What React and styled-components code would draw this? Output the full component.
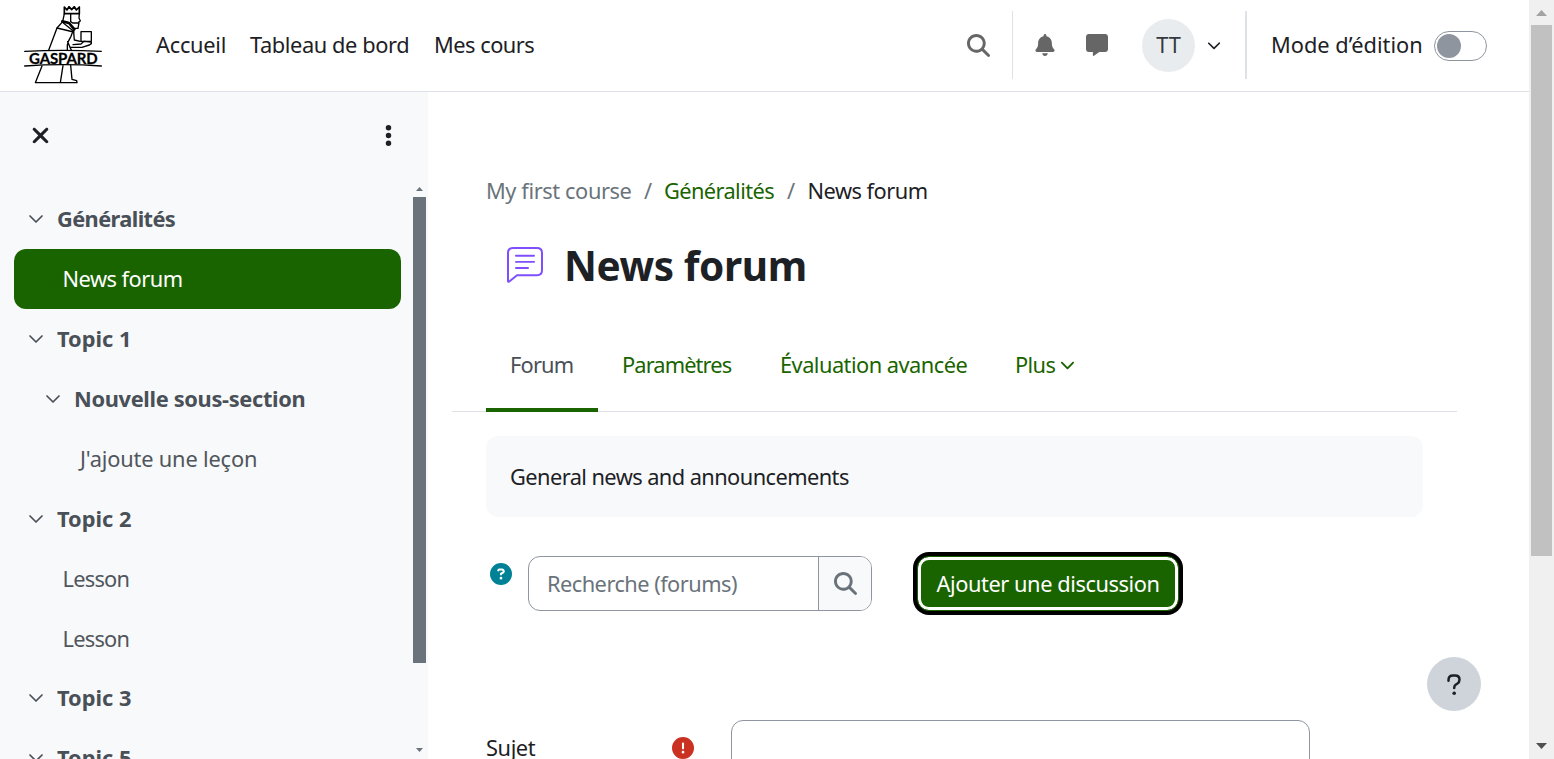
import React from "react";
import styled, { createGlobalStyle } from "styled-components";
import {
  FaMagnifyingGlass, FaBell, FaMessage, FaXmark, FaEllipsisVertical,
  FaCircleQuestion, FaCircleExclamation, FaChevronDown,
} from "react-icons/fa6";

const GlobalStyle = createGlobalStyle`
  * { box-sizing: border-box; }
  html, body { margin: 0; height: 100%; overflow: hidden; background: #fff; }
  body { font-family: "Segoe UI", "Noto Sans", sans-serif; font-size: 21.8px; line-height: 30px; color: #1d2125; }
  svg { display: block; flex: none; }
`;

const Page = styled.div`display: flex; width: 1554px; height: 759px; overflow: hidden;`;
const Site = styled.div`display: flex; flex-direction: column; width: 1529px; height: 759px;`;
const Text = styled.span`
  display: block; white-space: nowrap; letter-spacing: ${p => p.$track || 0}px;
`;

const Header = styled.header`
  display: flex; align-items: center; flex: none; height: 92px; padding: 0 42px 1px 24px;
  border-bottom: 1px solid #dee2e6;
`;
const Menu = styled.nav`display: flex; margin-left: 54px; flex: 1;`;
const MenuItem = styled.a`width: ${p => p.$w}px;`;
const Tools = styled.div`display: flex; align-items: center; color: #666;`;
const Notices = styled.div`display: flex; gap: 30px; margin-left: -1px; padding-bottom: 1px;`;
const Rule = styled.div`width: ${p => p.$w}px; height: 68px; background: #dee2e6; margin: 0 ${p => p.$right}px 0 ${p => p.$left}px;`;
const Avatar = styled.div`
  display: flex; align-items: center; justify-content: center; width: 53px; height: 53px;
  margin: 0 12px 0 34px; border-radius: 50%; background: #e9ecef; color: #343a40;
`;
const ModeLabel = styled.div`width: 163px; color: #1d2125;`;
const Switch = styled.div`
  display: flex; align-items: center; width: 53px; height: 30px; margin-top: 1px; padding-left: 2px;
  border: 1px solid #8f959e; border-radius: 15px;
`;
const Knob = styled.div`width: 24px; height: 24px; border-radius: 50%; background: #8f959e;`;

const Body = styled.div`display: flex; flex: 1; min-height: 0;`;
const Drawer = styled.aside`display: flex; flex-direction: column; width: 428px; background: #f8f9fb;`;
const DrawerHead = styled.div`
  display: flex; align-items: center; justify-content: space-between; flex: none;
  height: 91px; padding: 0 27px 5px 28px;
`;
const DrawerBody = styled.div`display: flex; flex: 1; min-height: 0; justify-content: space-between;`;
const Index = styled.div`width: 401px; padding: 6.5px 0 0 14px; overflow: hidden;`;
const IndexRow = styled.div`
  display: flex; align-items: center; height: 59.88px; padding-left: ${p => p.$indent}px;
  border-radius: 12px; color: ${p => (p.$active ? "#fff" : p.$bold ? "#495057" : "#50565c")};
  background: ${p => (p.$active ? "#1a6400" : "transparent")};
  font-weight: ${p => (p.$bold ? 700 : 400)};
  svg { margin-right: 13px; }
`;
const DrawerScroll = styled.div`
  display: flex; flex-direction: column; align-items: center; width: 13px; margin-right: 2px; padding: 4px 0 7px;
`;
const DrawerThumb = styled.div`width: 13px; height: 466px; margin: 6px 0 auto; background: #6a737b;`;

const Main = styled.main`display: flex; flex-direction: column; width: 1101px; padding: 84px 72px 0 24px;`;
const Crumbs = styled.div`display: flex; height: 30px; padding-left: 34px; color: #6a737b;`;
const Crumb = styled.div`width: ${p => p.$w}px; color: ${p => p.$color};`;
const TitleRow = styled.div`display: flex; align-items: center; height: 60px; margin-top: 30px; padding-left: 55px;
  svg { margin-bottom: 2px; }
`;
const Title = styled.h1`margin: 0 0 0 21px; font-size: 40.5px; line-height: 54px; font-weight: 700;`;
const Tabs = styled.nav`
  display: flex; height: 92px; margin-top: 24px; padding-left: 34px; border-bottom: 1px solid #dee2e6;
`;
const Tab = styled.a`
  display: flex; align-items: center; gap: 5px; width: ${p => p.$w}px; height: 92px; padding: 2px 0 0 24px;
  color: ${p => (p.$active ? "#495057" : "#1a6400")};
  border-bottom: 4px solid ${p => (p.$active ? "#1a6400" : "transparent")};
  svg { margin-bottom: 2px; }
`;
const Intro = styled.div`
  height: 81px; margin: 24px 34px 0; padding: 26px 24px; border-radius: 12px; background: #f8f9fb;
`;
const Actions = styled.div`display: flex; height: 63px; margin-top: 35px; padding-left: 38px;`;
const HelpIcon = styled.div`width: 38px; padding-top: 11px; color: #008196;`;
const Search = styled.div`
  display: flex; width: 344px; height: 55px; margin: 4px 41px 0 0; border: 1px solid #8f959e;
  border-radius: 12px; overflow: hidden; color: #6a737b;
`;
const SearchField = styled.div`flex: 1; padding: 12px 18px; color: #6a737b;`;
const SearchButton = styled.div`
  display: flex; align-items: center; justify-content: center; width: 53px;
  border-left: 1px solid #8f959e; background: #f8f9fb;
`;
const AddButton = styled.div`
  display: flex; align-items: center; justify-content: center; width: 262px; height: 55px; margin: 4px;
  border-radius: 12px; border: 1px solid #1a6400; background: #1a6400; color: #fff;
  box-shadow: 0 0 0 4px #000, inset 0 0 0 3px #fff;
`;
const FormRow = styled.div`display: flex; margin-top: 105px; padding-left: 34px; height: 39px;`;
const FieldName = styled.div`width: 186px; padding-top: 13px;`;
const Required = styled.div`width: 59px; padding-top: 17px; color: #ca3120;`;
const Field = styled.div`width: 579px; height: 55px; border: 1px solid #8f959e; border-radius: 12px;`;
const HelpButton = styled.div`
  position: absolute; left: 1427px; top: 657px; display: flex; align-items: center; justify-content: center;
  width: 54px; height: 54px; padding-top: 1px; border-radius: 50%; background: #ced4da;
`;
const PageScroll = styled.div`
  display: flex; flex-direction: column; align-items: center; width: 25px; padding: 10px 0; background: #f0f0f0;
`;
const PageThumb = styled.div`width: 21px; height: 531px; margin: 9px 0 auto; background: #c1c1c1;`;

const Arrow = ({ w, h, color, down }) => (
  <svg width={w} height={h} viewBox="0 0 10 6" preserveAspectRatio="none">
    <path d={down ? "M0 0h10L5 6z" : "M0 6h10L5 0z"} fill={color} />
  </svg>
);
const Chevron = () => (
  <svg width="16" height="10" viewBox="0 0 16 10" fill="none" stroke="currentColor" strokeWidth="1.7" strokeLinecap="round" strokeLinejoin="round">
    <path d="M2 2l6 6 6-6" />
  </svg>
);

const Logo = () => (
  <svg width="78" height="78" viewBox="72 18 234 234" fill="none" stroke="#000" strokeWidth="4" strokeLinejoin="round" strokeLinecap="round">
    <path d="M193 41V21l8 9 6-10 8 9 8-9 6 10 9-9v20z" strokeWidth="5" />
    <path d="M193 41l-5 24M238 41l-1 13 4 9-5 3M212 42v23l6 4h17M188 65l-17 19M188 65l18 3 16 17 12 0 3-17M190 69l31 25M171 84l50 12 1-7" />
    <path d="M187 64l20 5 16 19" strokeWidth="8" />
    <path d="M171 84l-25 67M217 98l-4 11-8 15-3 11v16M221 96l2 24 18 4M203 125l7 17h36l22-7 6-4v-5l-22-2-9 8-24 2M210 142l4 8" />
    <path d="M243 95h31v29h-31z" />
    <path d="M74 154q116-6 230 0M74 198q116-8 230 0" />
    <path d="M126 198l-20 50h125l-1-6-14-4-4-42M189 197l-8 51" />
    <text x="87" y="191" textLength="206" lengthAdjust="spacing" fill="#000" stroke="#000" strokeWidth="0.8" fontFamily="Lato, sans-serif" fontWeight="700" fontSize="45">GASPARD</text>
  </svg>
);
const ForumIcon = () => (
  <svg width="36" height="36" viewBox="0 0 36 37" preserveAspectRatio="none" fill="none" stroke="#7f4fff" strokeWidth="2" strokeLinecap="round" strokeLinejoin="round">
    <path d="M6 1h24q5 0 5 5v18q0 5-5 5H10l-8 6.6Q1 36 1 35V6q0-5 5-5zM9 9h18M9 15.3h18M9 21.6h12" />
  </svg>
);
const QuestionMark = () => (
  <svg width="14" height="22" viewBox="0 0 14 22" fill="none" stroke="#1d2125" strokeWidth="2.5" strokeLinecap="round" strokeLinejoin="round">
    <path d="M1.5 6.8V6Q1.5 1.6 6 1.6h2q4.5 0 4.5 4.2 0 2.6-2.3 4L8.6 10.8Q7.2 11.8 7.2 14" />
    <circle cx="7.2" cy="19.2" r="1.8" fill="#1d2125" stroke="none" />
  </svg>
);

const sections = [
  { label: "Généralités", bold: true, indent: 14, track: -0.6 },
  { label: "News forum", indent: 48.5, active: true, track: -0.52 },
  { label: "Topic 1", bold: true, indent: 14 },
  { label: "Nouvelle sous-section", bold: true, indent: 31, track: -0.33 },
  { label: "J'ajoute une leçon", indent: 66, track: -0.17 },
  { label: "Topic 2", bold: true, indent: 14 },
  { label: "Lesson", indent: 48.5, track: -0.75 },
  { label: "Lesson", indent: 48.5, track: -0.75 },
  { label: "Topic 3", bold: true, indent: 14 },
  { label: "Topic 5", bold: true, indent: 14 },
];

export default function App() {
  return (
    <Page>
      <GlobalStyle />
      <Site>
        <Header>
          <Logo />
          <Menu>
            <MenuItem $w={94}><Text $track={-0.25}>Accueil</Text></MenuItem>
            <MenuItem $w={184}><Text $track={-0.4}>Tableau de bord</Text></MenuItem>
            <MenuItem $w={120}><Text $track={-0.5}>Mes cours</Text></MenuItem>
          </Menu>
          <Tools>
            <FaMagnifyingGlass size={23} />
            <Rule $w={1} $left={22} $right={22} />
            <Notices>
              <FaBell size={22} />
              <FaMessage size={22} />
            </Notices>
            <Avatar><Text>TT</Text></Avatar>
            <FaChevronDown size={14} color="#1d2125" />
            <Rule $w={2} $left={24} $right={24} />
            <ModeLabel><Text>Mode d’édition</Text></ModeLabel>
            <Switch><Knob /></Switch>
          </Tools>
        </Header>
        <Body>
          <Drawer>
            <DrawerHead>
              <FaXmark size={25} />
              <FaEllipsisVertical size={25} />
            </DrawerHead>
            <DrawerBody>
              <Index>
                {sections.map((s, i) => (
                  <IndexRow key={i} $indent={s.indent} $bold={s.bold} $active={s.active}>
                    {s.bold && <Chevron />}
                    <Text $track={s.track}>{s.label}</Text>
                  </IndexRow>
                ))}
              </Index>
              <DrawerScroll>
                <Arrow w={7} h={4} color="#6a737b" />
                <DrawerThumb />
                <Arrow w={7} h={4} color="#6a737b" down />
              </DrawerScroll>
            </DrawerBody>
          </Drawer>
          <Main>
            <Crumbs>
              <Crumb $w={158} $color="#6a737b"><Text $track={-0.4}>My first course</Text></Crumb>
              <Crumb $w={20}>/</Crumb>
              <Crumb $w={123} $color="#1a6400"><Text $track={-0.6}>Généralités</Text></Crumb>
              <Crumb $w={20.5}>/</Crumb>
              <Crumb $w={130} $color="#1d2125"><Text $track={-0.52}>News forum</Text></Crumb>
            </Crumbs>
            <TitleRow>
              <ForumIcon />
              <Title><Text $track={-0.4}>News forum</Text></Title>
            </TitleRow>
            <Tabs>
              <Tab $w={112} $active><Text $track={-0.8}>Forum</Text></Tab>
              <Tab $w={158}><Text $track={-0.88}>Paramètres</Text></Tab>
              <Tab $w={235}><Text $track={-0.52}>Évaluation avancée</Text></Tab>
              <Tab $w={110}><Text $track={-0.6}>Plus</Text><FaChevronDown size={15} /></Tab>
            </Tabs>
            <Intro><Text $track={-0.57}>General news and announcements</Text></Intro>
            <Actions>
              <HelpIcon><FaCircleQuestion size={22} /></HelpIcon>
              <Search>
                <SearchField><Text $track={-0.54}>Recherche (forums)</Text></SearchField>
                <SearchButton><FaMagnifyingGlass size={23} /></SearchButton>
              </Search>
              <AddButton><Text $track={-0.43}>Ajouter une discussion</Text></AddButton>
            </Actions>
            <FormRow>
              <FieldName><Text $track={-0.4}>Sujet</Text></FieldName>
              <Required><FaCircleExclamation size={22} /></Required>
              <Field />
            </FormRow>
          </Main>
        </Body>
      </Site>
      <PageScroll>
        <Arrow w={11} h={6} color="#a3a3a3" />
        <PageThumb />
        <Arrow w={11} h={6} color="#505050" down />
      </PageScroll>
      <HelpButton><QuestionMark /></HelpButton>
    </Page>
  );
}
